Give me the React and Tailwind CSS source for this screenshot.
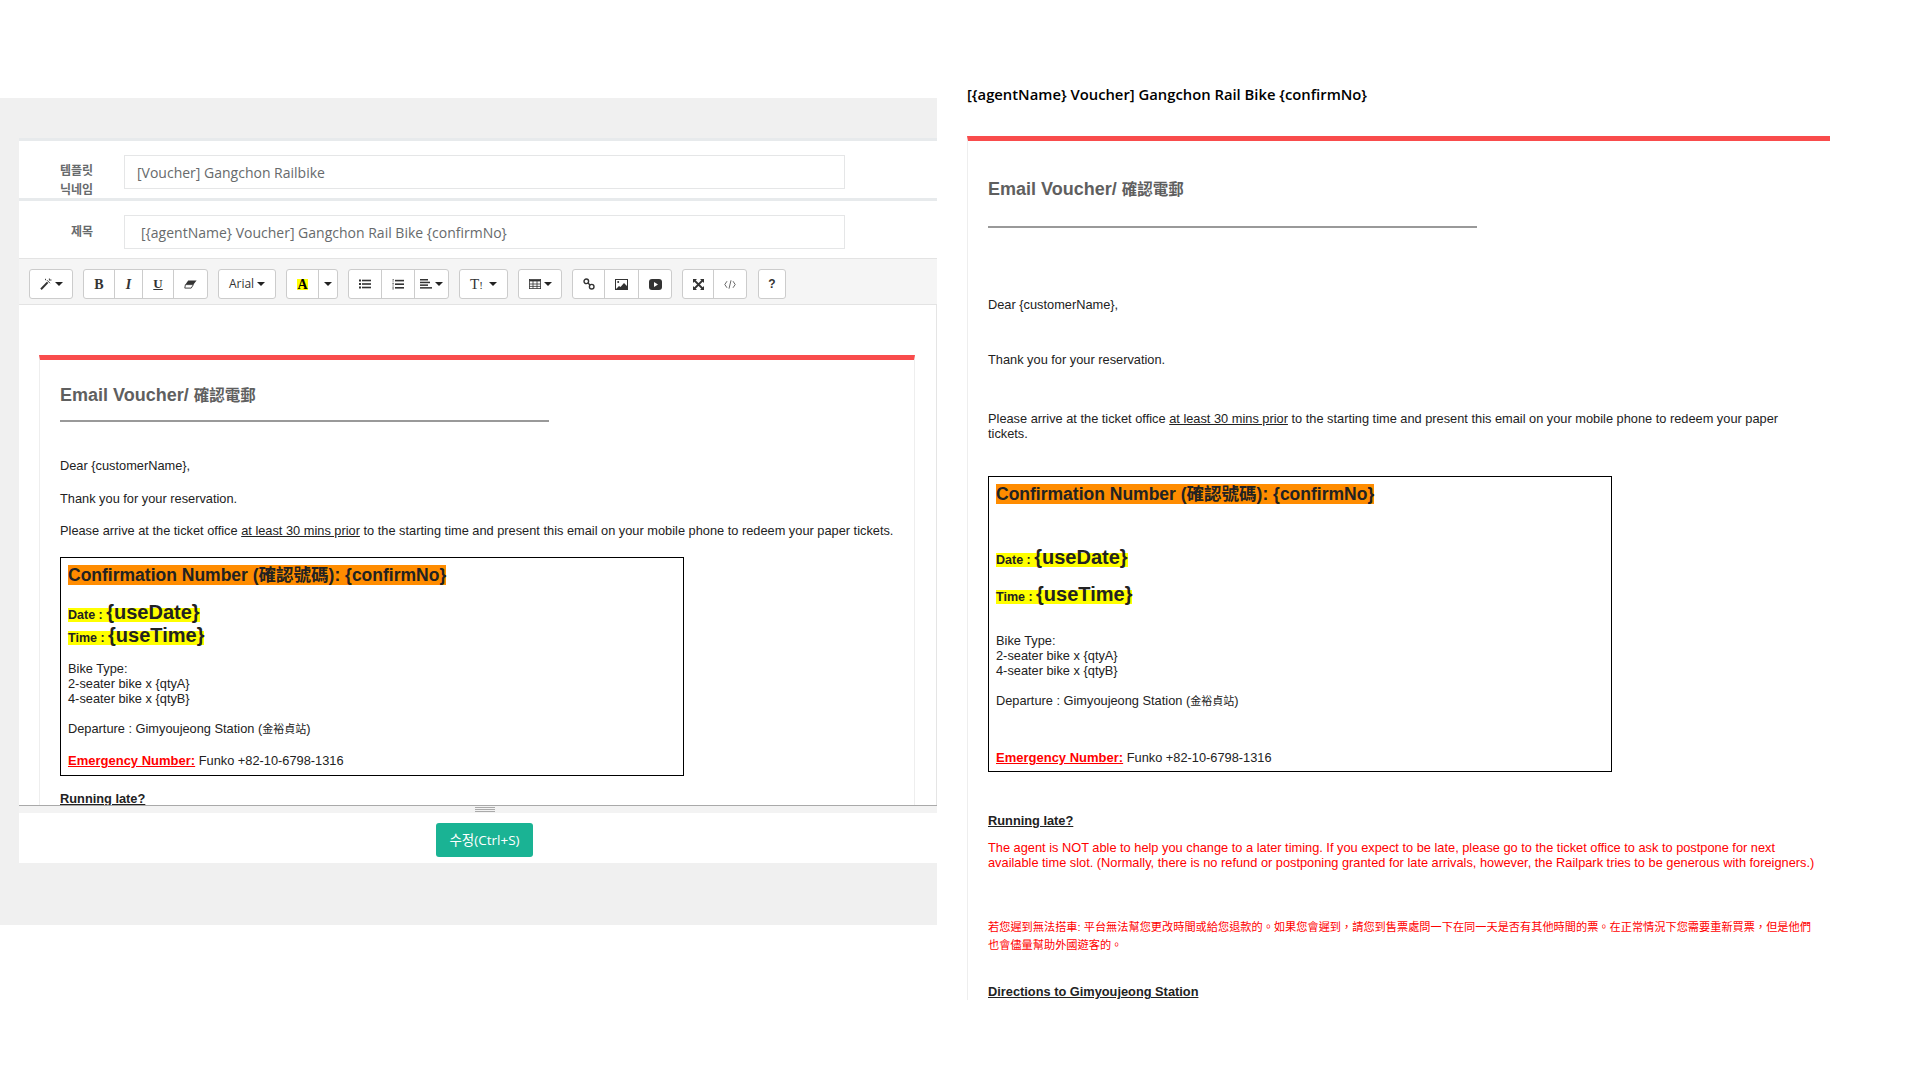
const Caret = () => <span className="inline-block h-0 w-0 border-x-[4px] border-t-[4px] border-x-transparent border-t-[#222]" />;

const WandIcon = () => (
  <svg width="12" height="12" viewBox="0 0 12 12" fill="none" stroke="#333">
    <path d="M1 11.2L7.6 4.4" strokeWidth="2" />
    <path d="M7 2.2L10 5.2M9.4 0.5v2M11.5 2h-2M5.5 0.8v1.4" strokeWidth="0.9" />
  </svg>
);

const EraserIcon = () => (
  <svg width="13" height="9" viewBox="0 0 13 9">
    <path d="M4.2 0.5H12.6L9.4 4.6H1.4z" fill="#333" />
    <path d="M1.4 4.6H9.4L7.2 8.1H0.8z" fill="#fff" stroke="#333" strokeWidth="0.9" />
  </svg>
);

const UlIcon = () => (
  <svg width="12" height="10" viewBox="0 0 12 10" fill="#333">
    <rect x="0" y="0.5" width="2" height="2" />
    <rect x="0" y="4" width="2" height="2" />
    <rect x="0" y="7.5" width="2" height="2" />
    <rect x="3" y="0.7" width="9" height="1.6" />
    <rect x="3" y="4.2" width="9" height="1.6" />
    <rect x="3" y="7.7" width="9" height="1.6" />
  </svg>
);

const OlIcon = () => (
  <svg width="12" height="11" viewBox="0 0 12 11" fill="#333">
    <rect x="0.5" y="0" width="1.4" height="0.9" opacity="0.7" />
    <rect x="0.2" y="1.6" width="1.8" height="0.8" opacity="0.7" />
    <rect x="0.2" y="3.8" width="1.8" height="1" opacity="0.7" />
    <rect x="0.2" y="5.6" width="1.8" height="0.8" opacity="0.7" />
    <rect x="0.2" y="7.6" width="1.8" height="1" opacity="0.7" />
    <rect x="0.2" y="9.4" width="1.8" height="1" opacity="0.7" />
    <rect x="3" y="0.8" width="9" height="1.6" />
    <rect x="3" y="4.4" width="9" height="1.6" />
    <rect x="3" y="8" width="9" height="1.6" />
  </svg>
);

const AlignIcon = () => (
  <svg width="12" height="10" viewBox="0 0 12 10" fill="#333">
    <rect y="0" width="8" height="1.5" />
    <rect y="2.7" width="10" height="1.5" />
    <rect y="5.4" width="8" height="1.5" />
    <rect y="8.1" width="12" height="1.5" />
  </svg>
);

const TableIcon = () => (
  <svg width="12" height="10" viewBox="0 0 12 10" fill="none" stroke="#333" strokeWidth="0.8">
    <rect x="0.4" y="0.4" width="11.2" height="9.2" />
    <path d="M0.4 1.6H11.6" strokeWidth="1.6" />
    <path d="M0.4 5H11.6M0.4 7.4H11.6M4 2v7.5M8 2v7.5" />
  </svg>
);

const LinkIcon = () => (
  <svg width="12" height="12" viewBox="0 0 12 12" fill="none" stroke="#333" strokeWidth="1.4">
    <circle cx="3.3" cy="3.3" r="2.3" />
    <circle cx="8.7" cy="8.7" r="2.3" />
    <path d="M5 5l2 2" />
  </svg>
);

const ImageIcon = () => (
  <svg width="13" height="11" viewBox="0 0 13 11">
    <rect x="0.5" y="0.5" width="12" height="10" fill="none" stroke="#333" />
    <path d="M1 10l3-3 1.5 1 3.5-4 3 3v3z" fill="#333" />
    <circle cx="3.2" cy="3" r="1" fill="#333" />
  </svg>
);

const VideoIcon = () => (
  <svg width="13" height="11" viewBox="0 0 13 11">
    <rect width="13" height="11" rx="3" fill="#333" />
    <path d="M5 3l4 2.5L5 8z" fill="#fff" />
  </svg>
);

const ExpandIcon = () => (
  <svg width="11" height="11" viewBox="0 0 11 11" fill="#333">
    <path d="M0 0h4L0 4zM11 0v4L7 0zM0 11V7l4 4zM11 11H7l4-4z" />
    <path d="M1.5 1.5l8 8M9.5 1.5l-8 8" stroke="#333" strokeWidth="1.8" />
  </svg>
);

const CodeIcon = () => (
  <svg width="12" height="9" viewBox="0 0 12 9" fill="none" stroke="#444" strokeWidth="0.8">
    <path d="M3 1.2L0.8 4.5 3 7.8M9 1.2l2.2 3.3L9 7.8M7 0.3l-2 8.4" />
  </svg>
);

function Btn({ w, children, last }) {
  return (
    <div className={`flex h-full items-center justify-center gap-[3px] text-[#333] ${w} ${last ? "" : "border-r border-[#ccc]"}`}>{children}</div>
  );
}

function Group({ children }) {
  return <div className="flex h-[30px] rounded-[3px] border border-[#ccc] bg-white">{children}</div>;
}

function Toolbar() {
  return (
    <div className="flex h-[47px] items-start gap-[10px] border-y border-[#e3e3e3] bg-[#f5f5f5] pl-[10px] pt-[10px]">
      <Group>
        <Btn w="w-[42px]" last><WandIcon /><Caret /></Btn>
      </Group>
      <Group>
        <Btn w="w-[31px]"><span className="font-['Liberation_Serif'] text-[14px] font-bold">B</span></Btn>
        <Btn w="w-[28px]"><span className="font-['Liberation_Serif'] text-[14px] font-bold italic">I</span></Btn>
        <Btn w="w-[31px]"><span className="font-['Liberation_Serif'] text-[13px] font-bold underline">U</span></Btn>
        <Btn w="w-[33px]" last><EraserIcon /></Btn>
      </Group>
      <Group>
        <Btn w="w-[56px]" last><span className="font-['Open_Sans'] text-[12px]">Arial</span><Caret /></Btn>
      </Group>
      <Group>
        <Btn w="w-[32px]"><span className="flex h-[11px] w-[11px] items-center justify-center bg-[#ffff00] font-['Liberation_Serif'] text-[14px] font-bold leading-[11px] text-black">A</span></Btn>
        <Btn w="w-[18px]" last><Caret /></Btn>
      </Group>
      <Group>
        <Btn w="w-[33px]"><UlIcon /></Btn>
        <Btn w="w-[33px]"><OlIcon /></Btn>
        <Btn w="w-[33px]" last><AlignIcon /><Caret /></Btn>
      </Group>
      <Group>
        <Btn w="w-[47px]" last>
          <span className="mr-[3px] font-['Liberation_Serif'] text-[15px] leading-none">T<span className="text-[11px]">!</span></span>
          <Caret />
        </Btn>
      </Group>
      <Group>
        <Btn w="w-[42px]" last><TableIcon /><Caret /></Btn>
      </Group>
      <Group>
        <Btn w="w-[32px]"><LinkIcon /></Btn>
        <Btn w="w-[34px]"><ImageIcon /></Btn>
        <Btn w="w-[32px]" last><VideoIcon /></Btn>
      </Group>
      <Group>
        <Btn w="w-[31px]"><ExpandIcon /></Btn>
        <Btn w="w-[32px]" last><CodeIcon /></Btn>
      </Group>
      <div className="ml-[1px]">
        <Group>
          <Btn w="w-[26px]" last><span className="font-['Liberation_Sans'] text-[12px] font-bold">?</span></Btn>
        </Group>
      </div>
    </div>
  );
}

function Heading() {
  return (
    <div className="text-[18px] font-bold leading-[22px] text-[#5f5f5f]">
      Email Voucher/ <span className="text-[15.5px]">確認電郵</span>
    </div>
  );
}

function HighlightRow({ label, value }) {
  return (
    <div className="h-[23px] text-[20px] font-bold leading-[23px] text-[#222]">
      <span className="bg-[#ffff00] text-[12.5px]">
        {label} : <span className="text-[20px]">{value}</span>
      </span>
    </div>
  );
}

function OrangeRow() {
  return (
    <div className="h-[20px] text-[17.5px] font-bold leading-[20px] text-[#222]">
      <span className="bg-[#ff8c00]">Confirmation Number (確認號碼): {"{confirmNo}"}</span>
    </div>
  );
}

function Departure() {
  return (
    <>
      Departure : Gimyoujeong Station (<span className="text-[11px]">金裕貞站</span>)
    </>
  );
}

function Emergency() {
  return (
    <div>
      <span className="text-[13px] font-bold text-[#ff0000] underline">Emergency Number:</span> Funko +82-10-6798-1316
    </div>
  );
}

function UnderlineNote() {
  return <span className="underline">at least 30 mins prior</span>;
}

function EditorForm() {
  return (
    <div className="h-[827px] w-[937px] shrink-0 bg-[#f0f0f0] pl-[19px] pt-[40px]">
      <div className="bg-white">
        <div className="flex h-[60px] border-t-[3px] border-[#e7eaec] pt-[14px]">
          <div className="mt-[5px] h-[38px] w-[74px] text-right font-['Noto_Sans_CJK_KR'] text-[12px] font-bold leading-[19px] text-[#676a6c]">
            템플릿
            <br />
            닉네임
          </div>
          <div className="ml-[31px] flex h-[34px] w-[721px] items-center border border-[#e5e6e7] pl-[12px] font-['Open_Sans'] text-[14px] text-[#676a6c]">
            [Voucher] Gangchon Railbike
          </div>
        </div>
        <div className="flex h-[60px] border-t-[3px] border-[#e7eaec] pt-[14px]">
          <div className="mt-[6px] w-[74px] text-right font-['Noto_Sans_CJK_KR'] text-[12px] font-bold leading-[19px] text-[#676a6c]">제목</div>
          <div className="ml-[31px] flex h-[34px] w-[721px] items-center border border-[#e5e6e7] pl-[16px] font-['Open_Sans'] text-[14px] text-[#676a6c]">
            {"[{agentName} Voucher] Gangchon Rail Bike {confirmNo}"}
          </div>
        </div>
        <Toolbar />
        <div className="h-[500px] overflow-hidden border-r border-[#e5e5e5] pl-[20px] pt-[50px] font-['Liberation_Sans','Noto_Sans_CJK_TC',sans-serif] text-[12.8px] leading-[15px] text-[#222]">
          <div className="w-[876px] border-x border-t-[5px] border-x-[#eee] border-t-[#f94c4c] pl-[20px] pt-[24px]">
            <Heading />
            <div className="mt-[13px] h-[2px] w-[489px] bg-[#999]" />
            <p className="mt-[36px]">{"Dear {customerName},"}</p>
            <p className="mt-[18px]">Thank you for your reservation.</p>
            <p className="mt-[17px] whitespace-nowrap">
              Please arrive at the ticket office <UnderlineNote /> to the starting time and present this email on your mobile phone to redeem your paper tickets.
            </p>
            <div className="mt-[19px] h-[219px] w-[624px] border border-black pl-[7px] pt-[7px]">
              <OrangeRow />
              <div className="mt-[16px]">
                <HighlightRow label="Date" value="{useDate}" />
                <HighlightRow label="Time" value="{useTime}" />
              </div>
              <p className="mt-[14px]">
                Bike Type:
                <br />
                {"2-seater bike x {qtyA}"}
                <br />
                {"4-seater bike x {qtyB}"}
              </p>
              <p className="mt-[15px]"><Departure /></p>
              <div className="mt-[16px]"><Emergency /></div>
            </div>
            <p className="mt-[15px] font-bold underline">Running late?</p>
          </div>
        </div>
        <div className="relative h-[8px] border-t border-[#a9a9a9] bg-[#f3f3f3]">
          <div className="absolute left-[456px] top-[1px] h-[5px] w-[20px] border-y border-[#aaa]">
            <div className="mt-[1px] h-px bg-[#aaa]" />
          </div>
        </div>
        <div className="h-[50px] pl-[417px] pt-[10px]">
          <div className="flex h-[34px] w-[97px] items-center justify-center rounded-[3px] bg-[#1ab394] font-['Open_Sans','Noto_Sans_CJK_KR',sans-serif] text-[13.5px] text-white">
            수정(Ctrl+S)
          </div>
        </div>
      </div>
    </div>
  );
}

function Preview() {
  return (
    <div className="ml-[30px] w-[863px] shrink-0 pt-[84px]">
      <div className="font-['Open_Sans'] text-[14.8px] font-semibold leading-[20px] text-black">
        {"[{agentName} Voucher] Gangchon Rail Bike {confirmNo}"}
      </div>
      <div className="mt-[32px] h-[864px] overflow-hidden border-l border-t-[5px] border-l-[#eee] border-t-[#f94c4c] pl-[20px] pt-[37px] font-['Liberation_Sans','Noto_Sans_CJK_TC',sans-serif] text-[12.8px] leading-[15px] text-[#222]">
        <Heading />
        <div className="mt-[25px] h-[2px] w-[489px] bg-[#999]" />
        <p className="mt-[69px]">{"Dear {customerName},"}</p>
        <p className="mt-[40px]">Thank you for your reservation.</p>
        <p className="mt-[44px] whitespace-nowrap">
          Please arrive at the ticket office <UnderlineNote /> to the starting time and present this email on your mobile phone to redeem your paper
          <br />
          tickets.
        </p>
        <div className="mt-[35px] h-[296px] w-[624px] border border-black pl-[7px] pt-[7px]">
          <OrangeRow />
          <div className="mt-[42px]">
            <HighlightRow label="Date" value="{useDate}" />
            <div className="mt-[14px]">
              <HighlightRow label="Time" value="{useTime}" />
            </div>
          </div>
          <p className="mt-[27px]">
            Bike Type:
            <br />
            {"2-seater bike x {qtyA}"}
            <br />
            {"4-seater bike x {qtyB}"}
          </p>
          <p className="mt-[15px]"><Departure /></p>
          <div className="mt-[41px]"><Emergency /></div>
        </div>
        <p className="mt-[41px] font-bold underline">Running late?</p>
        <p className="mt-[12px] whitespace-nowrap text-[#ff0000]">
          The agent is NOT able to help you change to a later timing. If you expect to be late, please go to the ticket office to ask to postpone for next
          <br />
          available time slot. (Normally, there is no refund or postponing granted for late arrivals, however, the Railpark tries to be generous with foreigners.)
        </p>
        <p className="mt-[48px] whitespace-nowrap text-[11.2px] leading-[18px] text-[#ff0000]">
          若您遲到無法搭車: 平台無法幫您更改時間或給您退款的。如果您會遲到，請您到售票處問一下在同一天是否有其他時間的票。在正常情況下您需要重新買票，但是他們
          <br />
          也會儘量幫助外國遊客的。
        </p>
        <p className="mt-[30px] font-bold underline">Directions to Gimyoujeong Station</p>
      </div>
    </div>
  );
}

export default function App() {
  return (
    <div className="h-[1080px] w-[1920px] overflow-hidden bg-white">
      <div className="flex items-start pt-[98px]">
        <EditorForm />
        <div className="-mt-[98px]">
          <Preview />
        </div>
      </div>
    </div>
  );
}
